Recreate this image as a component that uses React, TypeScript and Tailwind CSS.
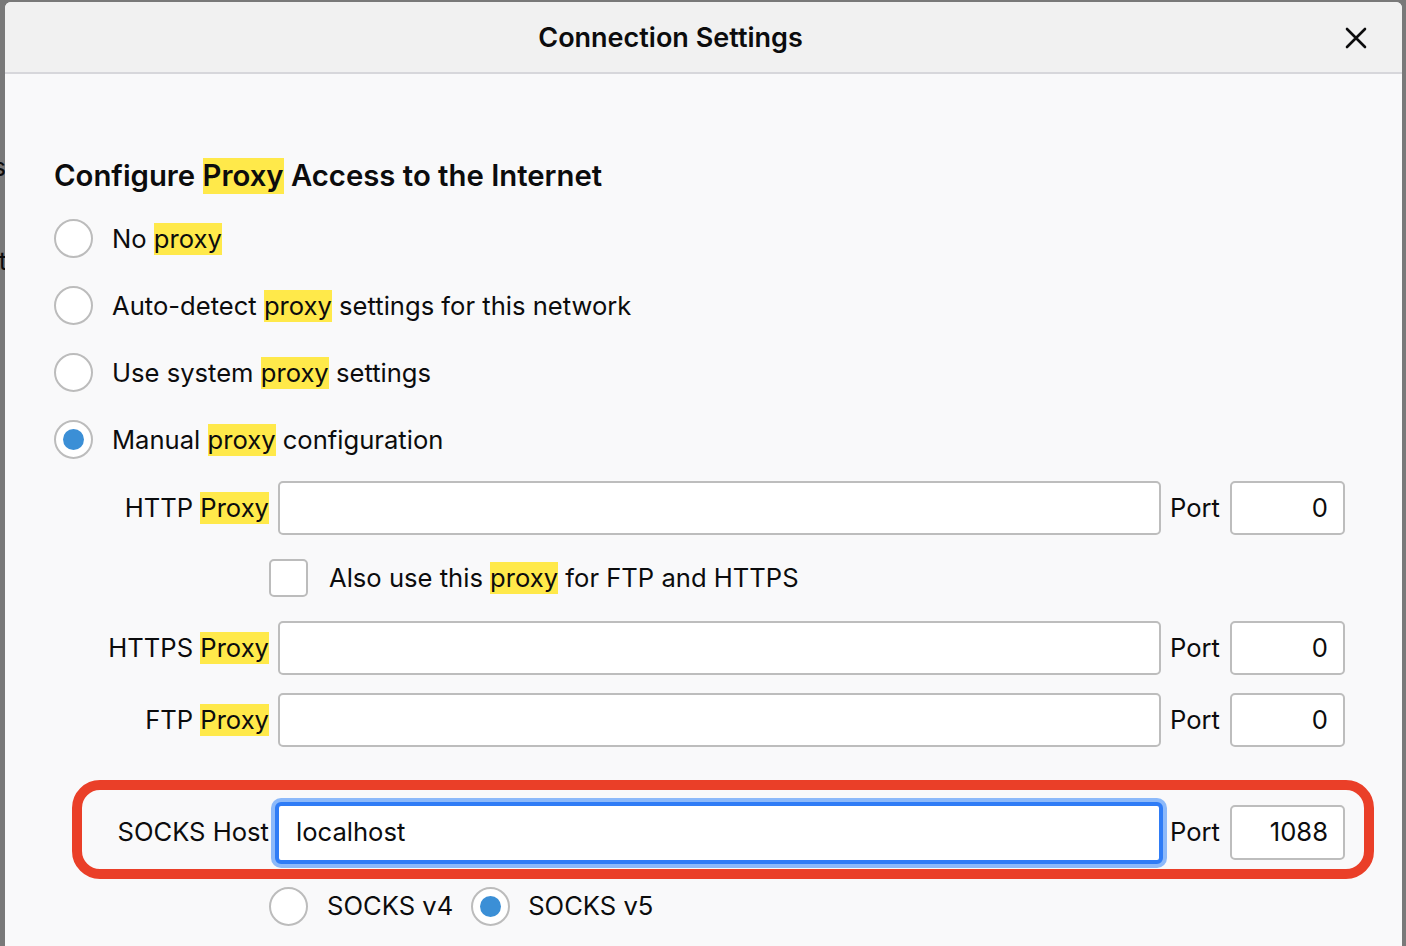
import React from "react";

const font = { fontFamily: "Inter, 'Noto Sans', sans-serif" };

function Hl({ children }: { children: React.ReactNode }) {
  return (
    <span className="inline-block bg-[#ffe94a] leading-[32px]">{children}</span>
  );
}

function Radio({ checked = false }: { checked?: boolean }) {
  return (
    <span className="flex h-[39px] w-[39px] shrink-0 items-center justify-center rounded-full border-2 border-[#bcbcbc] bg-white">
      {checked && <span className="h-[21px] w-[21px] rounded-full bg-[#3b8fd6]" />}
    </span>
  );
}

function RadioRow({ checked, children }: { checked?: boolean; children: React.ReactNode }) {
  return (
    <div className="flex h-[67px] items-center gap-[19px]">
      <Radio checked={checked} />
      <span className="leading-[32px]">{children}</span>
    </div>
  );
}

function ProxyRow({ label }: { label: string }) {
  return (
    <div className="flex h-[54px] items-center">
      <div className="w-[215px] shrink-0 text-right whitespace-nowrap">
        {label} <Hl>Proxy</Hl>
      </div>
      <div className="ml-[9px] h-full flex-1 rounded-[5px] border-2 border-[#bdbdbd] bg-white" />
      <span className="ml-[9px]">Port</span>
      <div className="ml-[10px] flex h-full w-[115px] items-center justify-end rounded-[5px] border-2 border-[#bdbdbd] bg-white pr-[15px]">
        0
      </div>
    </div>
  );
}

export default function App() {
  return (
    <div
      className="flex h-[946px] w-[1406px] flex-col overflow-hidden bg-[#797979] pt-[2px] text-[25.6px] text-[#0c0c0d]"
      style={font}
    >
      <div className="flex flex-1">
        {/* clipped bits of the page behind the dialog */}
        <div className="flex w-[5px] shrink-0 flex-col items-end overflow-hidden pt-[149px] leading-[32px]">
          <span className="-mr-[1px]">s</span>
          <span className="mt-[62px] -mr-[2px]">t</span>
        </div>

        <div className="flex flex-1 flex-col overflow-hidden rounded-t-[6px] bg-[#f9f9fa]">
          {/* Title bar */}
          <div className="relative flex h-[72px] shrink-0 items-center justify-center border-b-2 border-[#d7d7db] bg-[#f1f1f1] pr-[66px] pt-[3px]">
            <span className="text-[27px] font-semibold">Connection Settings</span>
            <svg
              className="absolute right-[35px] top-[25px]"
              width="22"
              height="22"
              viewBox="0 0 22 22"
              fill="none"
              stroke="#0c0c0d"
              strokeWidth="2.6"
              strokeLinecap="round"
            >
              <path d="M2 2L20 20M20 2L2 20" />
            </svg>
          </div>

          {/* Body */}
          <div className="flex flex-col pl-[49px] pr-[57px]">
            <h1 className="mt-[84px] text-[29.3px] font-semibold leading-[36px] whitespace-nowrap">
              Configure <span className="inline-block bg-[#ffe94a]">Proxy</span> Access to the Internet
            </h1>

            <div className="mt-[11px] flex flex-col">
              <RadioRow>
                No <Hl>proxy</Hl>
              </RadioRow>
              <RadioRow>
                Auto-detect <Hl>proxy</Hl> settings for this network
              </RadioRow>
              <RadioRow>
                Use system <Hl>proxy</Hl> settings
              </RadioRow>
              <RadioRow checked>
                Manual <Hl>proxy</Hl> configuration
              </RadioRow>
            </div>

            <div className="mt-[8px]">
              <ProxyRow label="HTTP" />
            </div>

            <div className="ml-[215px] mt-[24px] flex h-[38px] items-center gap-[21px]">
              <span className="h-[38px] w-[39px] rounded-[5px] border-2 border-[#bcbcbc] bg-white" />
              <span>
                Also use this <Hl>proxy</Hl> for FTP and HTTPS
              </span>
            </div>

            <div className="mt-[24px]">
              <ProxyRow label="HTTPS" />
            </div>
            <div className="mt-[18px]">
              <ProxyRow label="FTP" />
            </div>

            {/* SOCKS row with red annotation */}
            <div className="-mr-[29px] ml-[18px] mt-[33px] h-[99px] rounded-[28px] border-[10px] border-[#ea3f28]">
              <div className="flex h-full items-center pr-[19px] pt-[6px]">
                <span className="w-[187px] shrink-0 text-right whitespace-nowrap">SOCKS Host</span>
                <div className="ml-[6px] flex h-[62px] flex-1 items-center rounded-[6px] border-4 border-[#2f7cf6] bg-white pl-[17px] shadow-[0_0_0_4px_#8cb9fa]">
                  localhost
                </div>
                <span className="ml-[7px]">Port</span>
                <div className="ml-[10px] flex h-[55px] w-[115px] items-center justify-end rounded-[5px] border-2 border-[#bdbdbd] bg-white pr-[15px]">
                  1088
                </div>
              </div>
            </div>

            <div className="ml-[215px] mt-[7px] flex h-[40px] items-center">
              <Radio />
              <span className="ml-[19px]">SOCKS v4</span>
              <span className="ml-[18px]">
                <Radio checked />
              </span>
              <span className="ml-[18px]">SOCKS v5</span>
            </div>
          </div>
        </div>

        <div className="w-[4px] shrink-0" />
      </div>
    </div>
  );
}
